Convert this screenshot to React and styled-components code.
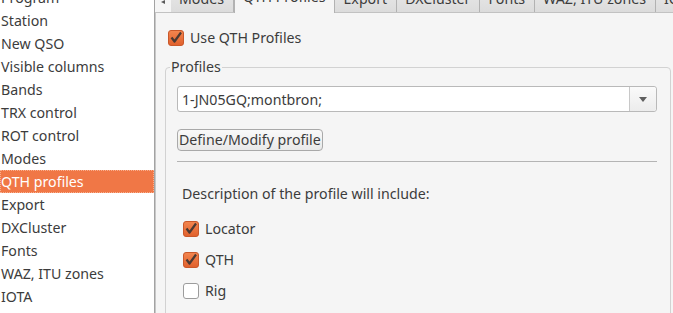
import React from 'react';
import styled, { createGlobalStyle } from 'styled-components';

const GlobalStyle = createGlobalStyle`
  html, body {
    margin: 0;
    padding: 0;
    overflow: hidden;
    background: #f5f5f5;
  }

  body {
    font-family: 'Noto Sans', 'Open Sans', sans-serif;
    font-size: 14.2px;
    color: #3c3c3c;
  }
`;

const Window = styled.div`
  width: 673px;
  height: 313px;

  display: flex;
  overflow: hidden;
`;

const SideList = styled.ul`
  width: 154px;
  height: 100%;

  margin: 0;
  padding: 0;
  flex-shrink: 0;

  list-style: none;
  overflow: hidden;

  background: #ffffff;
  border-right: 1px solid #a3a3a3;
`;

const SideInner = styled.div`
  margin-top: -14px;
`;

const SideItem = styled.li`
  height: 23px;
  padding-left: 1px;

  display: flex;
  align-items: center;
  box-sizing: border-box;

  white-space: nowrap;
  line-height: 23px;

  color: ${p => (p.$active ? '#ffffff' : '#3c3c3c')};
  background: ${p => (p.$active ? '#f07746' : 'transparent')};
  outline: ${p => (p.$active ? '1px dotted #f9b08f' : 'none')};
  outline-offset: -1px;
`;

const TabWidget = styled.div`
  flex: 1;
  min-width: 0;

  display: flex;
  flex-direction: column;
`;

const TabBar = styled.div`
  height: 12px;

  display: flex;
  align-items: flex-end;

  position: relative;
  z-index: 1;
`;

const ScrollArrow = styled.div`
  width: 16px;
  height: 12px;
  flex-shrink: 0;

  display: flex;
  justify-content: center;
  align-items: flex-start;
`;

const Tab = styled.div`
  height: ${p => (p.$selected ? '30px' : '28px')};
  margin-bottom: ${p => (p.$selected ? '-1px' : '0')};
  padding: 0 9px ${p => (p.$selected ? '7px' : '4px')} 8px;

  display: flex;
  align-items: flex-end;
  flex-shrink: 0;
  box-sizing: border-box;

  border: 1px solid #b2b2b2;
  border-bottom: none;
  border-left: ${p => (p.$selected ? '1px solid #b2b2b2' : 'none')};
  border-radius: 3px 3px 0 0;

  background: ${p => (p.$selected ? '#f5f5f5' : 'linear-gradient(#eaeaea, #dcdcdc)')};

  line-height: 18px;
  white-space: nowrap;
  color: #3c3c3c;
`;

const TabPane = styled.div`
  flex: 1;

  padding: 17px 2px 0 9px;

  border-top: 1px solid #c2c2c2;
  border-left: 1px solid #c8c8c8;
  background: #f5f5f5;
`;

const CheckRow = styled.label`
  height: 16px;
  margin-left: ${p => p.$indent || 0}px;

  display: flex;
  align-items: center;
  gap: 6px;

  line-height: 16px;
  color: #3c3c3c;
`;

const GroupBox = styled.fieldset`
  margin: 14px 0 0;
  padding: 0 13px 40px 11px;

  border: 1px solid #d2d2d2;
  border-radius: 4px;

  legend {
    margin-left: -7px;
    padding: 0 1px;
    line-height: 14px;
    color: #3c3c3c;
  }
`;

const Combo = styled.div`
  height: 26px;
  margin-top: 12px;

  display: flex;
  box-sizing: border-box;

  background: #ffffff;
  border: 1px solid #b9b9b9;
  border-radius: 3px;
`;

const ComboText = styled.div`
  flex: 1;
  padding-left: 4px;

  display: flex;
  align-items: center;

  color: #3c3c3c;
`;

const ComboButton = styled.div`
  width: 26px;

  display: flex;
  align-items: center;
  justify-content: center;

  border-left: 1px solid #c8c8c8;
  border-radius: 0 3px 3px 0;
  background: linear-gradient(#fafafa, #ececec);
`;

const PushButton = styled.button`
  height: 22px;
  margin-top: 17px;
  padding: 0 1px;

  display: block;

  font-family: inherit;
  font-size: 14.2px;
  line-height: 20px;
  color: #3c3c3c;

  background: linear-gradient(#f9f9f9, #e9e9e9);
  border: 1px solid #a9a9a9;
  border-radius: 4px;
`;

const Separator = styled.div`
  margin-top: 10px;
  border-top: 1px solid #b4b4b4;
`;

const Caption = styled.div`
  margin: 23px 0 0 5px;
  line-height: 18px;
`;

const CheckList = styled.div`
  margin-top: 18px;

  display: flex;
  flex-direction: column;
  gap: 15px;
`;

const CheckBox = ({ checked }) => (
  <svg width="16" height="16" viewBox="0 0 16 16">
    <defs>
      <linearGradient id="cbOrange" x1="0" y1="0" x2="0" y2="1">
        <stop offset="0" stopColor="#f3864f" />
        <stop offset="1" stopColor="#e0602c" />
      </linearGradient>
    </defs>
    {checked ? (
      <>
        <rect x="0.5" y="0.5" width="15" height="15" rx="2.5" fill="url(#cbOrange)" stroke="#c9582a" />
        <path d="M3.5 7.5 L6.5 11.5 L13 2.5" fill="none" stroke="#4b3a33" strokeWidth="2.2" strokeLinejoin="round" />
      </>
    ) : (
      <rect x="0.5" y="0.5" width="15" height="15" rx="2.5" fill="#ffffff" stroke="#9c9c9c" />
    )}
  </svg>
);

const sideItems = [
  'Program', 'Station', 'New QSO', 'Visible columns', 'Bands', 'TRX control',
  'ROT control', 'Modes', 'QTH profiles', 'Export', 'DXCluster', 'Fonts',
  'WAZ, ITU zones', 'IOTA',
];

const tabs = ['Modes', 'QTH Profiles', 'Export', 'DXCluster', 'Fonts', 'WAZ, ITU zones', 'IOTA'];

export default function App() {
  return (
    <>
      <GlobalStyle />
      <Window>
        <SideList>
          <SideInner>
            {sideItems.map(name => (
              <SideItem key={name} $active={name === 'QTH profiles'}>{name}</SideItem>
            ))}
          </SideInner>
        </SideList>

        <TabWidget>
          <TabBar>
            <ScrollArrow>
              <svg width="6" height="5" viewBox="0 0 6 5">
                <path d="M5 0 L5 4 L1 2 Z" fill="#5a5a5a" />
              </svg>
            </ScrollArrow>
            {tabs.map(t => (
              <Tab key={t} $selected={t === 'QTH Profiles'}>{t}</Tab>
            ))}
          </TabBar>

          <TabPane>
            <CheckRow $indent={3}>
              <CheckBox checked />
              Use QTH Profiles
            </CheckRow>

            <GroupBox>
              <legend>Profiles</legend>
              <Combo>
                <ComboText>1-JN05GQ;montbron;</ComboText>
                <ComboButton>
                  <svg width="8" height="5" viewBox="0 0 8 5">
                    <path d="M0 0 L8 0 L4 5 Z" fill="#5f5f5f" />
                  </svg>
                </ComboButton>
              </Combo>
              <PushButton>Define/Modify profile</PushButton>
              <Separator />
              <Caption>Description of the profile will include:</Caption>
              <CheckList>
                <CheckRow $indent={6}>
                  <CheckBox checked />
                  Locator
                </CheckRow>
                <CheckRow $indent={6}>
                  <CheckBox checked />
                  QTH
                </CheckRow>
                <CheckRow $indent={6}>
                  <CheckBox />
                  Rig
                </CheckRow>
              </CheckList>
            </GroupBox>
          </TabPane>
        </TabWidget>
      </Window>
    </>
  );
}
